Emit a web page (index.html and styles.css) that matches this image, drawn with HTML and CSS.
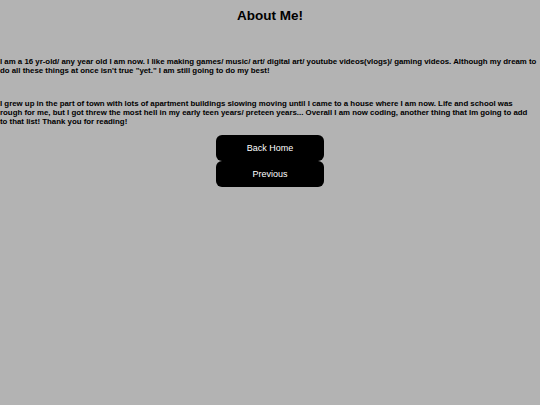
FILE: index.html
```html
<!DOCTYPE html>
<html>
<head>
<meta charset="utf-8">
<link rel="stylesheet" href="styles.css">
</head>
<body>
<h1 class="title">About Me!</h1>
<p class="para first">I am a 16 yr-old/ any year old I am now. I like making games/ music/ art/ digital art/ youtube videos(vlogs)/ gaming videos. Although my dream to do all these things at once isn't true "yet." I am still going to do my best!</p>
<p class="para second">I grew up in the part of town with lots of apartment buildings slowing moving until I came to a house where I am now. Life and school was rough for me, but I got threw the most hell in my early teen years/ preteen years... Overall I am now coding, another thing that Im going to add to that list! Thank you for reading!</p>
<div class="buttons">
  <a class="btn">Back Home</a>
  <a class="btn">Previous</a>
</div>
</body>
</html>
```
FILE: styles.css
```css
html, body {
  margin: 0;
  padding: 0;
  background: #b3b3b3;
  font-family: "Liberation Sans", Arial, sans-serif;
  color: #000;
}
.title {
  margin: 8px 0 0 0;
  font-size: 13.5px;
  line-height: 16px;
  text-align: center;
  font-weight: bold;
}
.para {
  font-size: 7.85px;
  line-height: 9.3px;
  font-weight: bold;
  margin: 0;
}
.first {
  margin-top: 33px;
}
.second {
  margin-top: 23px;
  max-width: 531px;
}
.buttons {
  margin-top: 9px;
  display: flex;
  flex-direction: column;
  align-items: center;
}
.btn {
  display: flex;
  align-items: center;
  justify-content: center;
  width: 108px;
  height: 26px;
  background: #000;
  color: #fff;
  border-radius: 6px;
  font-size: 9px;
  text-decoration: none;
}
```
